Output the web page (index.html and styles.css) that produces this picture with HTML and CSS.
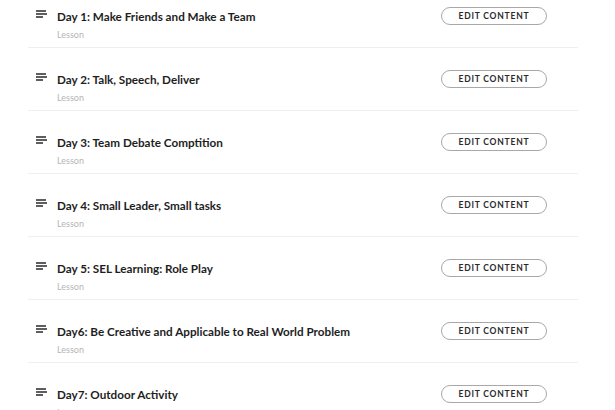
FILE: index.html
```html
<!DOCTYPE html>
<html lang="en">
<head>
  <meta charset="UTF-8">
  <meta name="viewport" content="width=device-width, initial-scale=1">
  <title>Course Lessons</title>
  <link rel="stylesheet" href="styles.css">
</head>
<body>
  <ul class="lesson-list">
    <li class="lesson">
      <div class="lesson-head">
        <svg class="lesson-icon" viewBox="0 0 11 8"><path d="M0 1h10M0 4h11M0 7h7"/></svg>
        <span class="lesson-title">Day 1: Make Friends and Make a Team</span>
        <button class="edit-btn">Edit Content</button>
      </div>
      <div class="lesson-type">Lesson</div>
    </li>
    <li class="lesson">
      <div class="lesson-head">
        <svg class="lesson-icon" viewBox="0 0 11 8"><path d="M0 1h10M0 4h11M0 7h7"/></svg>
        <span class="lesson-title">Day 2: Talk, Speech, Deliver</span>
        <button class="edit-btn">Edit Content</button>
      </div>
      <div class="lesson-type">Lesson</div>
    </li>
    <li class="lesson">
      <div class="lesson-head">
        <svg class="lesson-icon" viewBox="0 0 11 8"><path d="M0 1h10M0 4h11M0 7h7"/></svg>
        <span class="lesson-title">Day 3: Team Debate Comptition</span>
        <button class="edit-btn">Edit Content</button>
      </div>
      <div class="lesson-type">Lesson</div>
    </li>
    <li class="lesson">
      <div class="lesson-head">
        <svg class="lesson-icon" viewBox="0 0 11 8"><path d="M0 1h10M0 4h11M0 7h7"/></svg>
        <span class="lesson-title">Day 4: Small Leader, Small tasks</span>
        <button class="edit-btn">Edit Content</button>
      </div>
      <div class="lesson-type">Lesson</div>
    </li>
    <li class="lesson">
      <div class="lesson-head">
        <svg class="lesson-icon" viewBox="0 0 11 8"><path d="M0 1h10M0 4h11M0 7h7"/></svg>
        <span class="lesson-title">Day 5: SEL Learning: Role Play</span>
        <button class="edit-btn">Edit Content</button>
      </div>
      <div class="lesson-type">Lesson</div>
    </li>
    <li class="lesson">
      <div class="lesson-head">
        <svg class="lesson-icon" viewBox="0 0 11 8"><path d="M0 1h10M0 4h11M0 7h7"/></svg>
        <span class="lesson-title">Day6: Be Creative and Applicable to Real World Problem</span>
        <button class="edit-btn">Edit Content</button>
      </div>
      <div class="lesson-type">Lesson</div>
    </li>
    <li class="lesson">
      <div class="lesson-head">
        <svg class="lesson-icon" viewBox="0 0 11 8"><path d="M0 1h10M0 4h11M0 7h7"/></svg>
        <span class="lesson-title">Day7: Outdoor Activity</span>
        <button class="edit-btn">Edit Content</button>
      </div>
      <div class="lesson-type">Lesson</div>
    </li>
  </ul>
</body>
</html>
```

FILE: styles.css
```css
body {
  margin: 0;
  padding: 0;
  background-color: #fff;
  font-family: Lato, "Open Sans", sans-serif;
  color: #222;
}
.lesson-list {
  list-style: none;
  margin: -15px 0 0 28px;
  padding: 0;
  width: 550px;
}
.lesson {
  padding: 22px 31px 6px 8px;
  border-bottom: 1px solid #efefef;
}
.lesson-head {
  display: flex;
  align-items: center;
  height: 18px;
}
.lesson-icon {
  width: 11px;
  height: 8px;
  margin: -4px 10px 0 0;
  fill: none;
  stroke: #2a2a2a;
  stroke-width: 1.5;
}
.lesson-title {
  flex: 1;
  font-size: 11.7px;
  font-weight: bold;
  color: #1e1e1e;
}
.edit-btn {
  width: 106px;
  height: 18px;
  padding: 0;
  border: 1px solid #a8a8a8;
  border-radius: 9px;
  background: #fff;
  font-family: Lato, sans-serif;
  font-size: 8.5px;
  font-weight: bold;
  letter-spacing: 0.8px;
  text-transform: uppercase;
  color: #2a2a2a;
}
.lesson-type {
  margin: 4px 0 0 21px;
  height: 12px;
  line-height: 12px;
  font-size: 9px;
  color: #b5b5b5;
}
```
